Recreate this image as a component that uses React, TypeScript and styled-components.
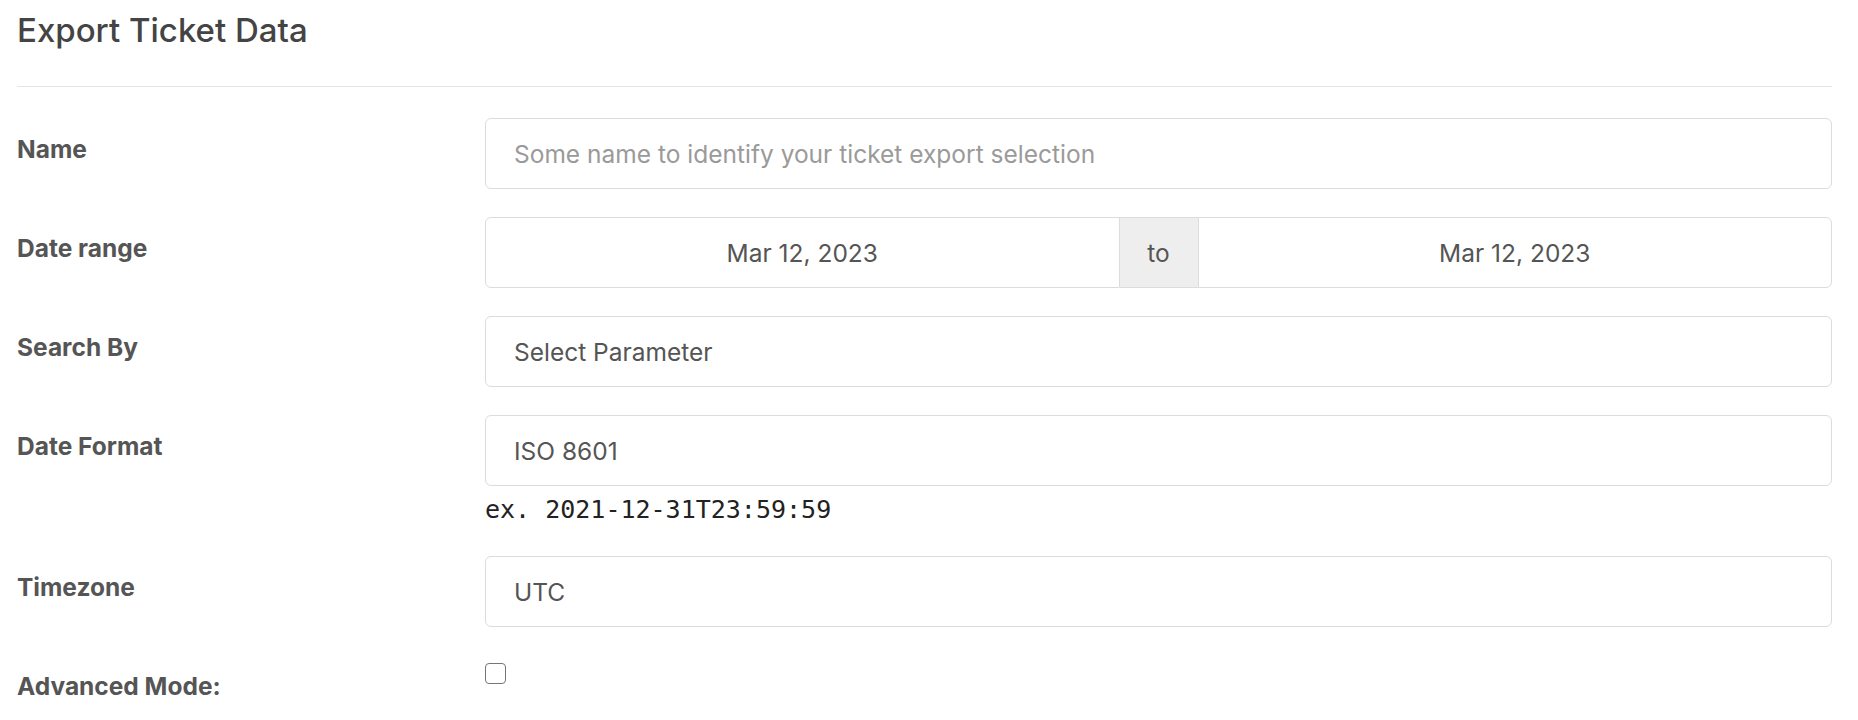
import React from 'react'
import styled, { createGlobalStyle } from 'styled-components';

const GlobalStyle = createGlobalStyle`
    html, body {
        margin: 0;
        padding: 0;
        background: #ffffff;
    }
    body {
        font-family: "Inter", "Liberation Sans", sans-serif;
        color: #555555;
    }
`;

type FieldRow = {
    label: string,
    value?: string,
    placeholder?: string,
    hint?: string
};

const fieldRows: FieldRow[] = [
    { label: "Search By", value: "Select Parameter" },
    { label: "Date Format", value: "ISO 8601", hint: "ex. 2021-12-31T23:59:59" },
    { label: "Timezone", value: "UTC" },
];

const App = () => {
  return (
    <>
        <GlobalStyle />
        <PageContainer>
            <PageTitle>Export Ticket Data</PageTitle>
            <Divider />
            <FormGrid>
                <FieldLabel>Name</FieldLabel>
                <FieldControl>
                    <TextInput placeholder="Some name to identify your ticket export selection" />
                </FieldControl>

                <FieldLabel>Date range</FieldLabel>
                <FieldControl>
                    <RangeGroup>
                        <DateInput readOnly value="Mar 12, 2023" />
                        <RangeAddon>to</RangeAddon>
                        <DateInput readOnly value="Mar 12, 2023" $last />
                    </RangeGroup>
                </FieldControl>

                {fieldRows.map((item : FieldRow) => {
                    return (
                        <React.Fragment key={item.label}>
                            <FieldLabel>{item.label}</FieldLabel>
                            <FieldControl>
                                <TextInput readOnly value={item.value} />
                                {item.hint && <HintText>{item.hint}</HintText>}
                            </FieldControl>
                        </React.Fragment>
                    );
                })}

                <FieldLabel>Advanced Mode:</FieldLabel>
                <FieldControl>
                    <CheckBox type="checkbox" />
                </FieldControl>
            </FormGrid>
        </PageContainer>
    </>
  )
};

const PageContainer = styled.div`
    padding: 0 26px 0 17px;
    display: flex;
    flex-direction: column;
`;

const PageTitle = styled.h2`
    margin: 11px 0 0;
    font-size: 33px;
    font-weight: 500;
    line-height: 38px;
    color: #444444;
`;

const Divider = styled.hr`
    width: 100%;
    margin: 37px 0 0;
    border: none;
    border-top: 1px solid #e5e5e5;
`;

const FormGrid = styled.div`
    display: grid;
    grid-template-columns: 468px 1fr;
    row-gap: 28px;
    margin-top: 31px;
`;

const FieldLabel = styled.div`
    padding-top: 13px;
    font-size: 24.5px;
    font-weight: 700;
    line-height: 36px;
    color: #555555;
`;

const FieldControl = styled.div`
    display: flex;
    flex-direction: column;
    align-items: flex-start;
`;

const TextInput = styled.input`
    box-sizing: border-box;
    width: 100%;
    height: 71px;
    padding: 0 28px;
    border: 1px solid #dcdcdc;
    border-radius: 6px;
    font-family: "Inter", "Liberation Sans", sans-serif;
    font-size: 24.5px;
    color: #555555;
    background: #ffffff;
    outline: none;

    &::placeholder {
        color: #9a9a9a;
    }
`;

const RangeGroup = styled.div`
    width: 100%;
    display: flex;
    height: 71px;
`;

const DateInput = styled.input<{ $last?: boolean }>`
    box-sizing: border-box;
    flex: 1;
    min-width: 0;
    height: 100%;
    border: 1px solid #dcdcdc;
    border-radius: ${(p) => (p.$last ? "0 6px 6px 0" : "6px 0 0 6px")};
    text-align: center;
    font-family: "Inter", "Liberation Sans", sans-serif;
    font-size: 24.5px;
    color: #555555;
    background: #ffffff;
    outline: none;
`;

const RangeAddon = styled.div`
    box-sizing: border-box;
    width: 78px;
    flex-shrink: 0;
    display: flex;
    align-items: center;
    justify-content: center;
    border-top: 1px solid #dcdcdc;
    border-bottom: 1px solid #dcdcdc;
    background: #eeeeee;
    font-size: 24.5px;
    color: #555555;
`;

const HintText = styled.div`
    margin-top: 6px;
    font-family: "DejaVu Sans Mono", "Liberation Mono", monospace;
    font-size: 25px;
    line-height: 36px;
    color: #222222;
`;

const CheckBox = styled.input`
    appearance: none;
    box-sizing: border-box;
    width: 21px;
    height: 21px;
    margin: 8px 0 0;
    border: 1.5px solid #767676;
    border-radius: 4px;
    background: #ffffff;
`;

export default App;
